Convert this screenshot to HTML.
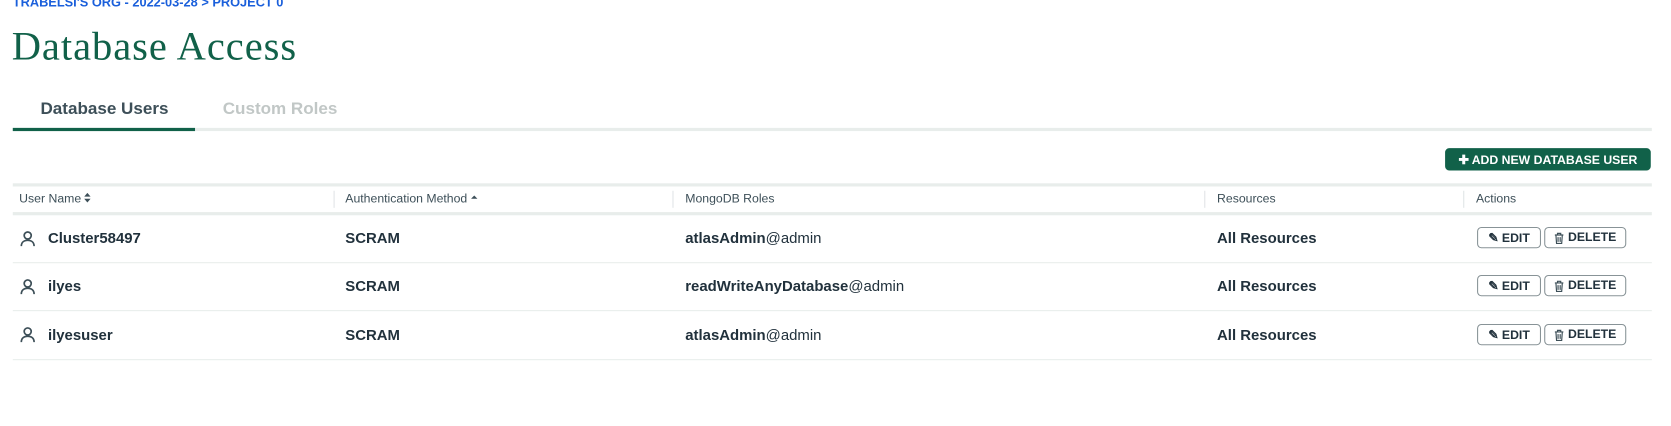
<!DOCTYPE html>
<html><head><meta charset="utf-8"><style>
body{margin:0;width:1671px;height:425px;background:#fff;font-family:"Liberation Sans",sans-serif;overflow:hidden;color:#21313c}
#w{position:absolute;left:0;top:0;width:1568px;height:400px;transform:scale(1.0657);transform-origin:0 0}
.a{position:absolute;white-space:nowrap}
.bc{left:12px;top:-5px;font-size:12px;font-weight:bold;color:#1a5fdb}
.t{left:11px;top:22px;font-family:"Liberation Serif",serif;font-size:38px;letter-spacing:0.9px;color:#116149}
.tab{top:94px;font-size:16px;font-weight:bold}
.hd{font-size:11.5px;color:#3d4f58;line-height:14px;height:14px}
.cell{font-size:14px;font-weight:bold;color:#21313c}
.btn{position:absolute;height:20px;border:1px solid #889397;border-radius:4px;font-size:11.5px;font-weight:bold;display:flex;align-items:center;justify-content:center;box-sizing:border-box;gap:3px;color:#21313c}
.line{position:absolute;left:12px;width:1538px}
.sep{position:absolute;width:1px;height:16px;background:#e0e4e6;top:179px}
</style></head><body><div id="w">
<div class="a bc">TRABELSI'S ORG - 2022-03-28 &gt; PROJECT 0</div>
<div class="a t">Database Access</div>
<div class="a tab" style="left:38px;color:#3d4f58">Database Users</div>
<div class="a tab" style="left:209px;color:#c1c7c6">Custom Roles</div>
<div class="line" style="top:120px;height:3px;background:#e8edeb"></div>
<div style="position:absolute;left:12px;top:120px;width:171px;height:3px;background:#116149"></div>
<div class="btn" style="left:1356px;top:139px;width:193px;height:21px;border:none;background:#116149;color:#fff;font-size:11.5px">✚ ADD NEW DATABASE USER</div>
<div class="line" style="top:172px;height:3px;background:#e8edeb"></div>
<div class="line" style="top:199px;height:3px;background:#e8edeb"></div>
<div class="sep" style="left:313px"></div><div class="sep" style="left:631px"></div><div class="sep" style="left:1130px"></div><div class="sep" style="left:1373px"></div>
<div class="a hd" style="left:18px;top:180px">User Name <svg width="6" height="9" viewBox="0 0 6 9"><path d="M0 3.5L3 0l3 3.5zM0 5.5L3 9l3-3.5z" fill="#3d4f58"/></svg></div>
<div class="a hd" style="left:324px;top:180px">Authentication Method <svg width="6" height="9" viewBox="0 0 6 9"><path d="M0 5.5L3 2.5l3 3z" fill="#3d4f58"/></svg></div>
<div class="a hd" style="left:643px;top:180px">MongoDB Roles</div>
<div class="a hd" style="left:1142px;top:180px">Resources</div>
<div class="a hd" style="left:1385px;top:180px">Actions</div>

<div class="line" style="top:246px;height:1px;background:#e8edeb"></div>
<div class="line" style="top:291px;height:1px;background:#e8edeb"></div>
<div class="line" style="top:337px;height:1px;background:#e8edeb"></div>

<svg class="a" style="left:18px;top:216px" width="16" height="16" viewBox="0 0 16 16"><circle cx="8" cy="5" r="3.3" fill="none" stroke="#3d4f58" stroke-width="1.6"/><path d="M2 15c0-4 3-5.5 6-5.5s6 1.5 6 5.5" fill="none" stroke="#3d4f58" stroke-width="1.6"/></svg>
<div class="a cell" style="left:45px;top:215px">Cluster58497</div>
<div class="a cell" style="left:324px;top:215px">SCRAM</div>
<div class="a cell" style="left:643px;top:215px">atlasAdmin<span style="font-weight:normal">@admin</span></div>
<div class="a cell" style="left:1142px;top:215px">All Resources</div>
<div class="btn" style="left:1386px;top:213px;width:60px">✎ EDIT</div>
<div class="btn" style="left:1449px;top:213px;width:77px"><svg width="10" height="11" viewBox="0 0 10 11"><path d="M1 2.5h8M3.5 2.5V1h3v1.5M2 2.5l.6 8h4.8l.6-8M4 4.5v4.5M6 4.5v4.5" fill="none" stroke="#3d4f58" stroke-width="1.1"/></svg>DELETE</div>

<svg class="a" style="left:18px;top:261px" width="16" height="16" viewBox="0 0 16 16"><circle cx="8" cy="5" r="3.3" fill="none" stroke="#3d4f58" stroke-width="1.6"/><path d="M2 15c0-4 3-5.5 6-5.5s6 1.5 6 5.5" fill="none" stroke="#3d4f58" stroke-width="1.6"/></svg>
<div class="a cell" style="left:45px;top:260px">ilyes</div>
<div class="a cell" style="left:324px;top:260px">SCRAM</div>
<div class="a cell" style="left:643px;top:260px">readWriteAnyDatabase<span style="font-weight:normal">@admin</span></div>
<div class="a cell" style="left:1142px;top:260px">All Resources</div>
<div class="btn" style="left:1386px;top:258px;width:60px">✎ EDIT</div>
<div class="btn" style="left:1449px;top:258px;width:77px"><svg width="10" height="11" viewBox="0 0 10 11"><path d="M1 2.5h8M3.5 2.5V1h3v1.5M2 2.5l.6 8h4.8l.6-8M4 4.5v4.5M6 4.5v4.5" fill="none" stroke="#3d4f58" stroke-width="1.1"/></svg>DELETE</div>

<svg class="a" style="left:18px;top:306px" width="16" height="16" viewBox="0 0 16 16"><circle cx="8" cy="5" r="3.3" fill="none" stroke="#3d4f58" stroke-width="1.6"/><path d="M2 15c0-4 3-5.5 6-5.5s6 1.5 6 5.5" fill="none" stroke="#3d4f58" stroke-width="1.6"/></svg>
<div class="a cell" style="left:45px;top:306px">ilyesuser</div>
<div class="a cell" style="left:324px;top:306px">SCRAM</div>
<div class="a cell" style="left:643px;top:306px">atlasAdmin<span style="font-weight:normal">@admin</span></div>
<div class="a cell" style="left:1142px;top:306px">All Resources</div>
<div class="btn" style="left:1386px;top:304px;width:60px">✎ EDIT</div>
<div class="btn" style="left:1449px;top:304px;width:77px"><svg width="10" height="11" viewBox="0 0 10 11"><path d="M1 2.5h8M3.5 2.5V1h3v1.5M2 2.5l.6 8h4.8l.6-8M4 4.5v4.5M6 4.5v4.5" fill="none" stroke="#3d4f58" stroke-width="1.1"/></svg>DELETE</div>
</div></body></html>
